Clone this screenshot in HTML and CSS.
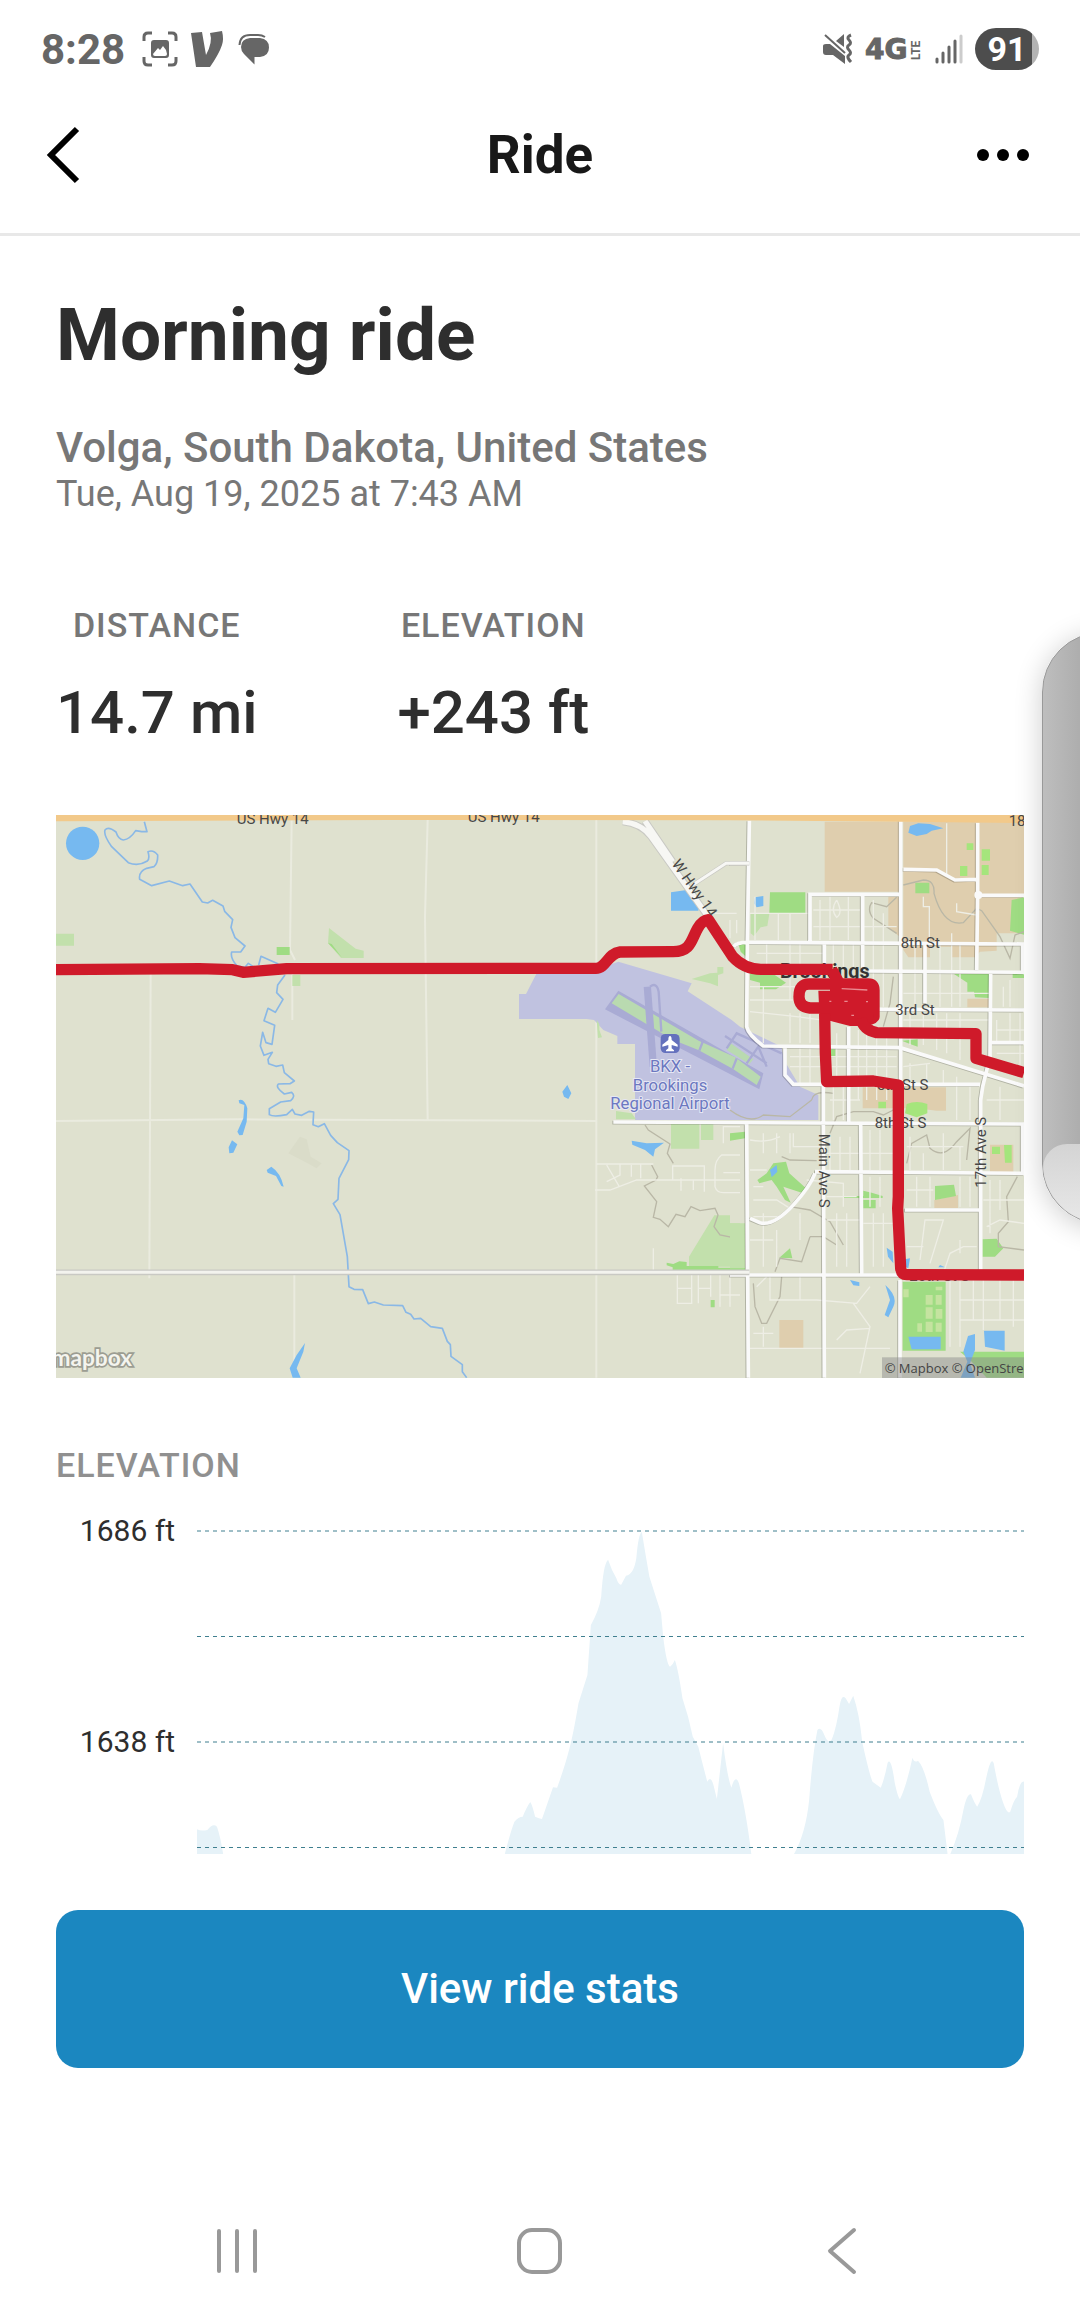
FILE: index.html
```html
<!DOCTYPE html>
<html lang="en">
<head>
    <meta charset="UTF-8">
    <meta name="viewport" content="width=device-width, initial-scale=1.0">
    <title>Ride</title>
    <link rel="stylesheet" href="styles.css">
</head>
<body>
<div class="screen">
    <div class="status-bar">
        <div class="status-left">
            <span class="clock">8:28</span>
            <svg class="icon" width="36" height="36" viewBox="0 0 36 36">
                <path d="M2 10V6q0-4 4-4h4M26 2h4q4 0 4 4v4M34 26v4q0 4-4 4h-4M10 34H6q-4 0-4-4v-4" fill="none" stroke="#666" stroke-width="3"/>
                <path fill-rule="evenodd" fill="#666" d="M12 9h12q3 0 3 3v12q0 3-3 3H12q-3 0-3-3V12q0-3 3-3zM11 23q0 2 2 2h10q2 0 2-2l-1-4-3-4-3 4-2-2z"/>
            </svg>
            <svg class="icon" width="36" height="36" viewBox="0 0 36 36">
                <path fill="#666" d="M1 2L12 1L16 24Q23 11 20 2L32 0Q34 8 32 14Q29 23 20 36H6Z"/>
            </svg>
            <svg class="icon" width="32" height="32" viewBox="0 0 32 32">
                <path fill="#666" d="M12 5h10q9 1 9 9.500t-9 9.500h-5.500v7.500L6 21q-3-3-3-7 0-8 9-9z"/>
                <path d="M1.500 12Q2 2 12 2h8q4 0 7 2" fill="none" stroke="#666" stroke-width="2"/>
            </svg>
        </div>
        <div class="status-right">
            <svg class="icon" width="30" height="30" viewBox="0 0 30 30">
                <path fill="#666" d="M0 12q0-2 3-2h4L22 22v8L10 21H3q-3 0-3-3zM13 7l8-7v13z"/>
                <path d="M2 1l20 18" stroke="#666" stroke-width="2"/>
                <path d="M28 1q-5 2-2 5t0 5t0 5t0 5t2 7" fill="none" stroke="#666" stroke-width="3"/>
            </svg>
            <svg class="icon" width="58" height="24" viewBox="0 0 58 24">
                <text x="0" y="22" class="net">4G</text>
                <text transform="translate(55 23) rotate(-90)" class="lte">LTE</text>
            </svg>
            <svg class="icon" width="28" height="30" viewBox="0 0 28 30">
                <path d="M2 25v3M8 19v9M14 13v15M20 7v21" stroke="#666" stroke-width="3" stroke-linecap="round"/>
                <path d="M26 2v26" stroke="#ccc" stroke-width="3" stroke-linecap="round"/>
            </svg>
            <span class="battery">91</span>
        </div>
    </div>

    <header class="header">
        <button class="icon-button" aria-label="Back">
            <svg width="34" height="58" viewBox="0 0 34 58"><path d="M31 3L5 29L31 55" fill="none" stroke="#000" stroke-width="6"/></svg>
        </button>
        <h1 class="header-title">Ride</h1>
        <button class="icon-button" aria-label="More">
            <svg width="58" height="14" viewBox="0 0 58 14"><circle cx="7" cy="7" r="6"/><circle cx="27" cy="7" r="6"/><circle cx="47" cy="7" r="6"/></svg>
        </button>
    </header>

    <main class="content">
        <h2 class="ride-name">Morning ride</h2>
        <p class="place">Volga, South Dakota, United States</p>
        <p class="date">Tue, Aug 19, 2025 at 7:43 AM</p>

        <div class="stats">
            <div class="stat">
                <div class="label">DISTANCE</div>
                <div class="value">14.7 mi</div>
            </div>
            <div class="stat">
                <div class="label">ELEVATION</div>
                <div class="value">+243 ft</div>
            </div>
        </div>

        <svg class="map" viewBox="0 0 2904 1689">
            <rect width="2904" height="1689" fill="#dfe1cf"/>

            <!-- north west -->
            <g transform="translate(-48 -45)">
                <path class="faint" d="M755 60L750 450L765 480M757 520V660M332 520L328 1435M48 963L600 958L1670 963M763 1420V1733M1163 60L1155 350L1163 960M1669 60V1733"/>
                <path class="grass" d="M48 401H102V437H48ZM867 384L947 446L971 452V474H903L864 429ZM757 525H781V558H757Z"/>
                <path class="park" d="M710 441H749V465H710ZM864 429L875 432L905 472Z"/>
                <circle cx="128" cy="130" r="50" class="water"/>
                <path class="water" d="M596 901Q612 893 622 925L620 965L608 1005L598 1006L592 995L610 955L613 915L598 910ZM576 1021L592 1033L580 1058L568 1060L566 1042ZM680 1110L694 1100Q722 1118 731 1160L724 1158L708 1128L683 1118ZM795 1629L790 1655L770 1705L782 1733H758L749 1705L770 1665Z"/>
                <path fill="#dadcc9" d="M780 1010L800 1018L812 1070L845 1090L830 1105L800 1088L745 1060Z"/>
                <path class="river" d="M313 65L321 95L305 95L287 92Q270 118 250 120Q235 118 228 96Q205 78 195 90Q190 105 215 140L265 188Q295 200 322 183Q330 175 324 155Q340 148 353 165Q354 190 342 200L320 205Q295 215 299 238L335 257L388 243L428 257L450 252L487 306L503 309L518 301L549 318L554 334L578 359L573 382L585 413L615 438L602 456L575 456Q570 475 592 498L615 502L625 490L640 500M656 495L663 469L715 492M735 525L713 555L710 578L729 598L706 637L684 625L672 662L704 676L696 733L678 728L668 697L661 738L672 766L697 757L684 778L686 791L708 799L728 795L733 818L763 843L750 851L715 852Q705 862 733 882L755 877Q768 888 752 902L722 906L688 926L688 944Q700 952 740 944L757 928L765 942L785 946L808 934L821 936L819 974L835 980L853 971L872 1006L892 1028L927 1052L926 1079L897 1135L894 1198L880 1211L900 1244L922 1370L927 1460L942 1468L968 1469L985 1511L1003 1506L1030 1515L1088 1517L1098 1537L1112 1543L1122 1557L1142 1555L1172 1580L1207 1585L1222 1624L1231 1634L1233 1669L1267 1694L1267 1715L1280 1733"/>
            </g>

            <!-- airport and west side -->
            <g transform="translate(1002 -45)">
                <path fill="#c0c2e0" d="M440 520L630 505L685 485L905 550L893 574L1025 660L1050 680L1175 740L1182 780L1230 860L1285 885V960H735V732H682V708L640 690L612 660L590 657H387V582H408Z"/>
                <path fill="#a9abd4" d="M685 572L1120 820L1108 868L645 628Z"/>
                <path fill="#b9dab0" d="M686 582L926 722L1036 772L1112 830L1100 855L1028 806L925 750L850 720L665 610ZM1020 728L1090 778L1078 792L1010 750Z"/>
                <path d="M772 560L790 800" stroke="#a9abd4" stroke-width="22" fill="none"/>
                <path d="M780 560Q800 545 806 575L814 695M940 720L928 752M1040 775L1028 806M1005 708L1130 790M1010 745L1040 700L1175 760M1070 790L1105 740L1130 800" stroke="#a9abd4" stroke-width="7" fill="none"/>
                <path class="grass" d="M905 537L960 520L982 518V501H1000V520L984 525V559L960 550ZM620 660L628 672V690L636 712L624 714ZM678 933L725 940L738 958H678ZM843 970H928V1046H843ZM933 970H970V1020H933ZM973 1246H1020V1270H1050V1400H897V1370Z"/>
                <path class="park" d="M830 1388L850 1392L868 1384L890 1386V1398H985V1403H1065V1416H848V1402L830 1396ZM962 1500H974V1522H962Z"/>
                <path class="water" d="M843 277L890 270L905 300L928 318L925 332H843ZM532 855L544 880L535 897L522 890L517 875ZM725 1022L770 1030L822 1028L795 1048L790 1070L765 1050L727 1034Z"/>
                <path class="trail" d="M765 975L775 990L840 1032L832 1060L850 1090M785 1095L803 1130L798 1140L763 1158L800 1205L790 1252L810 1258L835 1280L858 1243L885 1250L903 1220L930 1232L975 1225L984 1245L972 1280L990 1305L1040 1315L1050 1370"/>
                <path class="minor" d="M620 1092H790M615 1170H660L740 1140H1050M650 1095L688 1160M690 1092V1125L650 1145M724 1095V1130M752 1092V1135M848 1140V1098H943V1175M873 1172V1135M910 1138V1170M1050 1065H995Q975 1080 975 1110V1160Q980 1178 1000 1178H1050M1000 1118H1050M790 1345V1410M862 1425V1510H905V1425M925 1425V1510M962 1425V1490M925 1465H962M862 1465H905M990 1425V1520M1020 1425V1520M990 1485H1050M1000 1030V980H1050M1020 360V415M1040 360V400M975 340H1040"/>
                <rect x="812" y="702" width="57" height="57" rx="14" fill="#6471bd"/>
                <path fill="#fff" d="M840 708q5 0 5 12l18 14v6l-18-5v10l7 6v3h-24v-3l7-6v-10l-18 5v-6l18-14q0-12 5-12z"/>
            </g>

            <!-- town -->
            <g transform="translate(2022 -45)">
                <path fill="#dfceae" d="M284 65H510V275H284ZM520 65H882V400H800V452L750 455L735 472H663V440H600V472H535L520 450ZM475 290H510V410L475 385ZM398 862H648V932H620L560 925H398ZM712 596H777V622H712ZM780 1034H850V1116H780ZM613 1200L684 1185V1224H613ZM148 1560H220V1646H148Z"/>
                <path class="grass" d="M62 342H118L112 378L92 382L72 408L62 400ZM0 1270H45V1415H0Z"/>
                <path class="park" d="M120 277H226V340H118ZM556 248H598V280H556ZM845 300L882 292V404L840 392ZM25 432L48 428V470L32 455ZM60 520L130 522L168 548L138 568H90V548L60 540ZM672 522H777V594L735 592L732 575H712V548ZM848 522H882V534H848ZM515 722L563 718V740L540 732ZM303 748H316V772H303ZM0 1000L45 995V1015L0 1022ZM82 1140L110 1120L130 1090L168 1085L178 1120L228 1165L215 1178L160 1160L182 1208L165 1200L140 1160L125 1140L88 1150ZM342 1188H400V1172L425 1178L458 1188V1194H342ZM400 1200H437V1225H400ZM615 1158L672 1154L678 1188L615 1200ZM180 1345L187 1375L148 1373ZM757 1318L800 1316L820 1345L795 1370H757ZM518 1445H647V1652H518ZM690 1655H882V1733H770L720 1680ZM0 1405H45V1417H0Z"/>
                <path fill="#a5e57c" d="M530 912Q560 900 592 912V940L560 952L525 940ZM445 905H468V925H445ZM710 130H730V150H710ZM755 148H780V182H755ZM690 198H712V228H690ZM755 195H776V225H755ZM786 1040H810V1062H786ZM822 1035H845V1088H825Z"/>
                <path fill="#c5e3a0" d="M587 1485H608V1514H587ZM617 1485H635V1514H617ZM587 1522H608V1556H587ZM617 1527H637V1556H617ZM587 1565H608V1596H587ZM617 1568H635V1595H617ZM562 1570H576V1595H562ZM520 1468H536V1492H520ZM617 1460H637V1471H617Z"/>
                <path class="water" d="M540 78L565 70L600 72L640 85L605 92L590 102L560 108L535 98ZM75 292L100 288V318L80 322L72 310ZM120 1110L140 1095L142 1115L125 1132ZM470 1343L488 1355L490 1390L474 1370ZM525 1378L540 1375L535 1405L525 1400ZM630 1395L645 1402H625ZM360 1440L388 1447V1458L370 1456ZM466 1455Q505 1490 490 1520L475 1552L464 1545L480 1500ZM535 1610H632V1648H545ZM762 1592H824V1652L765 1640ZM714 1608L735 1602V1650L720 1690L735 1733H692L712 1685L700 1655Z"/>
                <path class="trail" d="M520 255L580 240Q615 240 612 280Q640 380 700 368L740 325L755 332L810 410L840 475L855 405L882 395M500 292L470 320L425 308Q410 330 430 355L500 400M490 530L480 610L460 680M245 900Q250 870 310 880M0 930Q60 975 100 945L180 950L245 900M300 1000L320 950L370 935H430L460 945L490 930M530 1090L545 1030L590 1005L600 1045Q640 1080 680 1025L720 985L710 1080M862 1130L830 1190L835 1265L805 1300V1340L882 1350M180 1220L240 1230L300 1265L340 1335M240 1310H280L320 1335M240 1310L215 1385L150 1375L135 1415M70 1450L75 1520L95 1570L110 1570L150 1490L155 1430M155 1070L180 1080L260 1082"/>
                <path class="minor" d="M75 290V420M145 340V420M180 340V420M60 340H240M270 300V420M300 290V420M250 330H390M250 380H390M320 300Q300 330 320 352Q340 340 320 300M355 290V420M430 300V510M460 340V510M400 380H500M110 430V510M80 460H280M180 430V600M210 430V500M310 430V500M340 430V500M370 430V500M430 430V620M460 430V620M580 290V320H598V430M555 430V620M630 430V620M665 400V620M690 430V620M650 70V230M680 310V335L740 345M60 560H270M60 600H190M100 560V730M60 635L200 650L500 690M180 640V730M210 640V730M240 640V730M320 700V850M385 690V900M410 690V900M440 690V900M470 690V900M540 640V735M580 640V735M620 640V750M650 640V760M690 640V780M520 660H780M520 580H780M800 660V725M840 640V725M870 640V800M800 690H882M820 560V620M840 540V620M180 770H500M180 800H500M210 745V850M240 745V850M520 800L600 790M800 760H882M540 790V840M590 790V850M640 810V850M680 830V960M720 860V960M810 860V960M770 900H882M300 900H390M310 860V960M340 860V960M60 1020Q110 1030 150 1010M100 1000V1060M140 1000V1060M180 1000V1060M60 1110H110M190 1000V1040H270M300 1010V1110M330 1010V1110M360 1010V1110M420 990V1110M450 990V1110M290 1060H490M540 1010V1110M580 1060V1110M530 1040H700M640 1000V1110M690 1040V1110M70 1160H100M70 1200H140L180 1225M230 1140L340 1150V1220M420 1130V1220M450 1130V1220M290 1190H380M290 1260H390M320 1240V1400M350 1240V1400M400 1270H490M430 1240V1400M460 1240V1400M560 1130V1220M600 1130V1220M530 1170H610M690 1130V1220M720 1130V1220M570 1380L585 1260H640L600 1390M530 1340H580M640 1420L660 1360L700 1340H740M690 1320V1360M70 1250H160M100 1240V1400M140 1290V1400M60 1320H130M210 1240V1320M80 1460L110 1430M120 1430V1500H260L380 1510L420 1460M210 1430V1500M370 1510L420 1580L390 1720M320 1620L350 1590L420 1585M60 1645H480M100 1580V1640M70 1600H130M660 1440V1640M690 1440V1640M730 1440V1560M760 1440V1590M810 1440V1560M850 1440V1580M690 1500H882M690 1560H882M780 1140V1300M810 1140V1230M760 1200H882M770 1280L810 1260L882 1270"/>
            </g>

            <g class="casing"><use href="#roads"/></g>
            <path id="roads" class="road" transform="translate(2022 -45)" d="M58 62L52 430L50 680Q55 705 100 738L510 743L882 858M0 190H52M240 425V283H510M398 283V515M512 60V900L510 950M283 430V515M10 440Q20 427 52 427L882 432M415 513L882 517M585 430V610M743 68V270L740 510M520 208L620 210L675 240L740 238M750 286H882M782 517L780 770L758 860L752 900V1410M445 628L882 630M356 680V965M165 740V825L190 853H750M780 728H882M878 430V515M280 855V970L283 1733M50 970L55 1733M-350 966L882 972M392 970L395 1420M255 1115L882 1120M255 1120Q240 1160 190 1215Q130 1280 90 1268L60 1255M525 1230H748M510 1440V1733M878 972V1118M0 1425H520"/>
            <circle cx="2767" cy="240" r="12" fill="#fafafa"/>
            <path d="M0 1372H2080" stroke="#c9c9c4" stroke-width="17" fill="none"/>
            <path d="M0 1372H2080" stroke="#f3f3ee" stroke-width="9" fill="none"/>
            <path d="M1910 210L2010 145H2080" stroke="#c9c9c4" stroke-width="13" fill="none"/>
            <path d="M1910 210L2010 145H2080" stroke="#f7f7f4" stroke-width="9" fill="none"/>
            <path d="M1700 20Q1755 25 1785 65L1960 310M1767 18L1850 140" stroke="#c9c9c4" stroke-width="22" fill="none"/>
            <path d="M1700 20Q1755 25 1785 65L1960 310M1767 18L1850 140" stroke="#f7f7f4" stroke-width="16" fill="none"/>
            <path d="M0 0H2904V24L2535 20L2022 16L1000 15L0 19Z" fill="#f2c98a"/>

            <g class="street">
                <text x="542" y="26">US Hwy 14</text>
                <text x="1235" y="20">US Hwy 14</text>
                <text x="2858" y="34">18</text>
                <text x="2534" y="400">8th St</text>
                <text x="2518" y="599">3rd St</text>
                <text x="2462" y="826">5th St S</text>
                <text x="2456" y="940">8th St S</text>
                <text x="2560" y="1397">20th St S</text>
                <text transform="translate(1846 146) rotate(55)">W Hwy 14</text>
                <text transform="translate(2288 956) rotate(90)">Main Ave S</text>
                <text transform="translate(2791 1118) rotate(-90)">17th Ave S</text>
            </g>
            <text class="town" x="2172" y="489">Brookings</text>
            <g class="airport">
                <text x="1842" y="770">BKX -</text>
                <text x="1842" y="827">Brookings</text>
                <text x="1842" y="883">Regional Airport</text>
            </g>

            <path class="route" d="M0 464L430 461L530 464L562 472L692 461L1620 460C1650 460 1655 415 1692 411L1852 410C1905 410 1905 375 1925 340Q1940 315 1957 314L2030 425Q2065 463 2115 463H2330"/>
            <g transform="translate(2022 -45)">
                <path class="route" d="M305 508L325 545M280 624H240Q207 620 207 590Q207 550 240 552L415 552Q432 552 432 570V650Q425 660 400 660"/>
                <path class="route-fill" d="M265 572H300V552H432V640Q430 676 400 678H360L290 660L268 640Z"/>
                <path class="route" d="M284 640L286 760L290 845L430 843L505 855V1190L503 1225L512 1405Q515 1424 530 1424L882 1425"/>
                <path class="route" d="M392 655Q400 690 440 698L738 701V775L882 818"/>
                <path d="M335 566L412 570M298 604h6M343 604h10M408 605h6M364 646h8" stroke="#e98a90" stroke-width="4"/>
            </g>

            <text class="wordmark" x="228" y="1654">mapbox</text>
            <rect x="2478" y="1627" width="426" height="62" fill="#888" opacity=".45"/>
            <text class="credit" x="2486" y="1674">© Mapbox © OpenStreetMap</text>
        </svg>

        <h3 class="label chart-title">ELEVATION</h3>
        <div class="chart">
            <div class="axis">
                <span>1686 ft</span>
                <span>1638 ft</span>
            </div>
            <svg class="plot" viewBox="286 330 1201 972" preserveAspectRatio="none">
                <path fill="#e6f2f8" d="M286 1302V1228Q292 1234 301 1230Q309 1208 315 1220Q320 1250 324 1302ZM733 1302Q742 1230 747 1205Q753 1190 759 1190Q765 1160 770 1146Q773 1155 777 1190Q783 1196 787 1197Q795 1150 803 1102L809 1103Q820 1040 825 1000Q832 950 840 850L853 765L858 615Q870 570 873 530Q876 430 883 419Q888 450 895 475Q898 495 902 494L909 467Q920 465 924 415Q927 340 932 336Q937 400 943 470L960 580L963 650Q968 735 973 740Q977 735 980 720Q985 750 991 835Q1000 890 1006 950L1014 980Q1020 1030 1027 1085Q1032 1065 1036 1095L1041 1137L1050 970Q1056 1070 1062 1103Q1068 1060 1073 1090Q1083 1170 1091 1302ZM1153 1302Q1170 1240 1175 1140Q1180 1000 1187 930Q1192 918 1197 945Q1203 975 1208 958Q1215 920 1219 860Q1222 820 1228 835L1233 852L1239 827Q1248 880 1252 965Q1262 1060 1267 1085L1279 1103Q1284 1080 1289 1028Q1294 1010 1299 1085Q1304 1135 1307 1137Q1316 1100 1325 1013Q1328 1030 1333 1022Q1342 1040 1350 1115Q1362 1180 1370 1200L1376 1302ZM1380 1302Q1393 1240 1399 1170Q1404 1120 1410 1123Q1415 1150 1419 1160Q1426 1140 1432 1075Q1439 1005 1443 1030Q1450 1110 1457 1150Q1463 1185 1467 1175Q1472 1140 1477 1130Q1481 1080 1487 1085V1302Z"/>
                <path class="grid-line" d="M286 333H1487M286 649.500H1487M286 966H1487M286 1282.500H1487"/>
            </svg>
        </div>

        <button class="primary">View ride stats</button>
    </main>

    <nav class="nav-bar">
        <button class="icon-button" aria-label="Recent apps">
            <svg width="44" height="48" viewBox="0 0 44 48"><path d="M3 4V44M21 4V44M39 4V44" stroke="#999" stroke-width="4" stroke-linecap="round"/></svg>
        </button>
        <button class="icon-button" aria-label="Home">
            <svg width="48" height="48" viewBox="0 0 48 48"><rect x="3" y="3" width="41" height="42" rx="13" fill="none" stroke="#999" stroke-width="4"/></svg>
        </button>
        <button class="icon-button" aria-label="Back">
            <svg width="30" height="48" viewBox="0 0 30 48"><path d="M27 3L3 24L27 45" fill="none" stroke="#999" stroke-width="4" stroke-linecap="round" stroke-linejoin="round"/></svg>
        </button>
    </nav>

    <div class="edge-panel"><div class="edge-foot"></div></div>
</div>
</body>
</html>
```
FILE: styles.css
```css
* {
    box-sizing: border-box;
}

body {
    margin: 0;
    background-color: #fff;
    font-family: Roboto, Arial, sans-serif;
    color: #2e2e2e;
}

h1, h2, h3, p {
    margin: 0;
}

svg {
    display: block;
}

button {
    border: none;
    background: none;
    padding: 0;
    font-family: inherit;
    cursor: pointer;
}

.screen {
    position: relative;
    display: flex;
    flex-direction: column;
    min-height: 100vh;
    overflow: hidden;
}

/* status bar */
.status-bar {
    display: flex;
    justify-content: space-between;
    align-items: center;
    height: 98px;
    padding: 0 41px;
}

.status-left,
.status-right {
    display: flex;
    align-items: center;
    gap: 12px;
}

.icon {
    overflow: visible;
}

.clock {
    margin-right: 5px;
    font-size: 42px;
    font-weight: 700;
    color: #666;
}

.net {
    font: bold 28px "DejaVu Sans", sans-serif;
    fill: #666;
    stroke: #666;
    stroke-width: 1;
}

.lte {
    font: bold 12px Roboto, sans-serif;
    fill: #666;
}

.battery {
    width: 64px;
    height: 42px;
    border-radius: 21px;
    background: linear-gradient(to right, #4d4d4d 57px, #b3b3b3 57px);
    color: #fff;
    font-size: 34px;
    font-weight: 700;
    line-height: 42px;
    text-align: center;
}

/* header */
.header {
    display: flex;
    justify-content: space-between;
    align-items: center;
    height: 138px;
    padding: 0 46px 22px;
    border-bottom: 3px solid #e8e8e8;
}

.icon-button {
    display: flex;
    justify-content: center;
    align-items: center;
}

.header .icon-button {
    min-width: 58px;
}

.header .icon-button:first-child {
    justify-content: flex-start;
}

.header-title {
    font-size: 53px;
    font-weight: 700;
    color: #181818;
}

/* ride */
.content {
    padding: 56px 56px 0;
}

.ride-name {
    font-size: 73px;
    font-weight: 700;
    line-height: 86px;
}

.place {
    margin-top: 45px;
    font-size: 42px;
    font-weight: 500;
    line-height: 50px;
    color: #777;
}

.date {
    font-size: 36px;
    line-height: 42px;
    color: #777;
}

.stats {
    display: flex;
    gap: 140px;
    margin-top: 90px;
}

.stat {
    text-align: center;
}

.label {
    font-size: 34px;
    font-weight: 500;
    line-height: 40px;
    letter-spacing: 1px;
    color: #777;
}

.value {
    margin-top: 32px;
    font-size: 60px;
    font-weight: 500;
    line-height: 72px;
}

.map {
    width: 100%;
    height: auto;
    margin-top: 66px;
}

.faint {
    fill: none;
    stroke: #eaebdf;
    stroke-width: 6;
}

.minor {
    fill: none;
    stroke: #eeeee5;
    stroke-width: 4;
}

.road {
    fill: none;
    stroke: #fafafa;
    stroke-width: 11;
}

.casing {
    opacity: .2;
    filter: brightness(0);
    transform: translate(-3px, 2px);
}

.trail {
    fill: none;
    stroke: #b9b7a6;
    stroke-width: 4;
}

.river {
    fill: none;
    stroke: #8ab8e6;
    stroke-width: 5;
    stroke-linejoin: round;
}

.water {
    fill: #76b9f0;
}

.grass {
    fill: #c2e0ac;
}

.park {
    fill: #9fdc83;
}

.route {
    fill: none;
    stroke: #cf1a2a;
    stroke-width: 34;
    stroke-linejoin: round;
}

.route-fill {
    fill: #cf1a2a;
}

.street {
    font-size: 45px;
    fill: #474747;
}

.town {
    font-size: 59px;
    font-weight: 700;
    fill: #333;
}

.airport {
    font-size: 50px;
    fill: #6c78c0;
    stroke: #e6e7f4;
    stroke-width: 6;
    paint-order: stroke;
    text-anchor: middle;
}

.wordmark {
    font: 700 68px Lato, sans-serif;
    fill: #f4f4ee;
    stroke: #9c9d92;
    stroke-width: 10;
    paint-order: stroke;
    text-anchor: end;
}

.credit {
    font: 39px "Open Sans", sans-serif;
    fill: #444;
}

/* elevation chart */
.chart-title {
    margin-top: 67px;
    color: #909090;
}

.chart {
    display: flex;
    margin-top: 28px;
}

.axis {
    display: flex;
    flex-direction: column;
    gap: 175px;
    width: 141px;
    padding-right: 22px;
    text-align: right;
    font-size: 30px;
    line-height: 36px;
}

.plot {
    flex: 1;
    min-width: 0;
    height: 324px;
    margin-top: 17px;
}

.grid-line {
    fill: none;
    stroke: #3f7f8f;
    stroke-width: 1;
    stroke-dasharray: 4 4;
    vector-effect: non-scaling-stroke;
}

.primary {
    width: 100%;
    margin-top: 56px;
    padding: 54px 0;
    border-radius: 22px;
    background-color: #1b87c0;
    color: #fff;
    font-size: 42px;
    font-weight: 500;
    line-height: 50px;
}

/* system navigation */
.nav-bar {
    display: grid;
    grid-template-columns: repeat(3, 1fr);
    margin-top: auto;
    padding: 0 87px 41px;
}

.edge-panel {
    position: absolute;
    top: 632px;
    right: -82px;
    display: flex;
    align-items: flex-end;
    width: 120px;
    height: 592px;
    overflow: hidden;
    border: 1px solid #999;
    border-radius: 60px;
    background: linear-gradient(to right, #bebebe, #adadad 38px);
    box-shadow: 0 4px 28px rgba(0, 0, 0, .2);
}

.edge-foot {
    width: 100%;
    height: 79px;
    border-radius: 24px 24px 0 0;
    background: linear-gradient(#d4d4d4, #e8e8e8);
}
```
